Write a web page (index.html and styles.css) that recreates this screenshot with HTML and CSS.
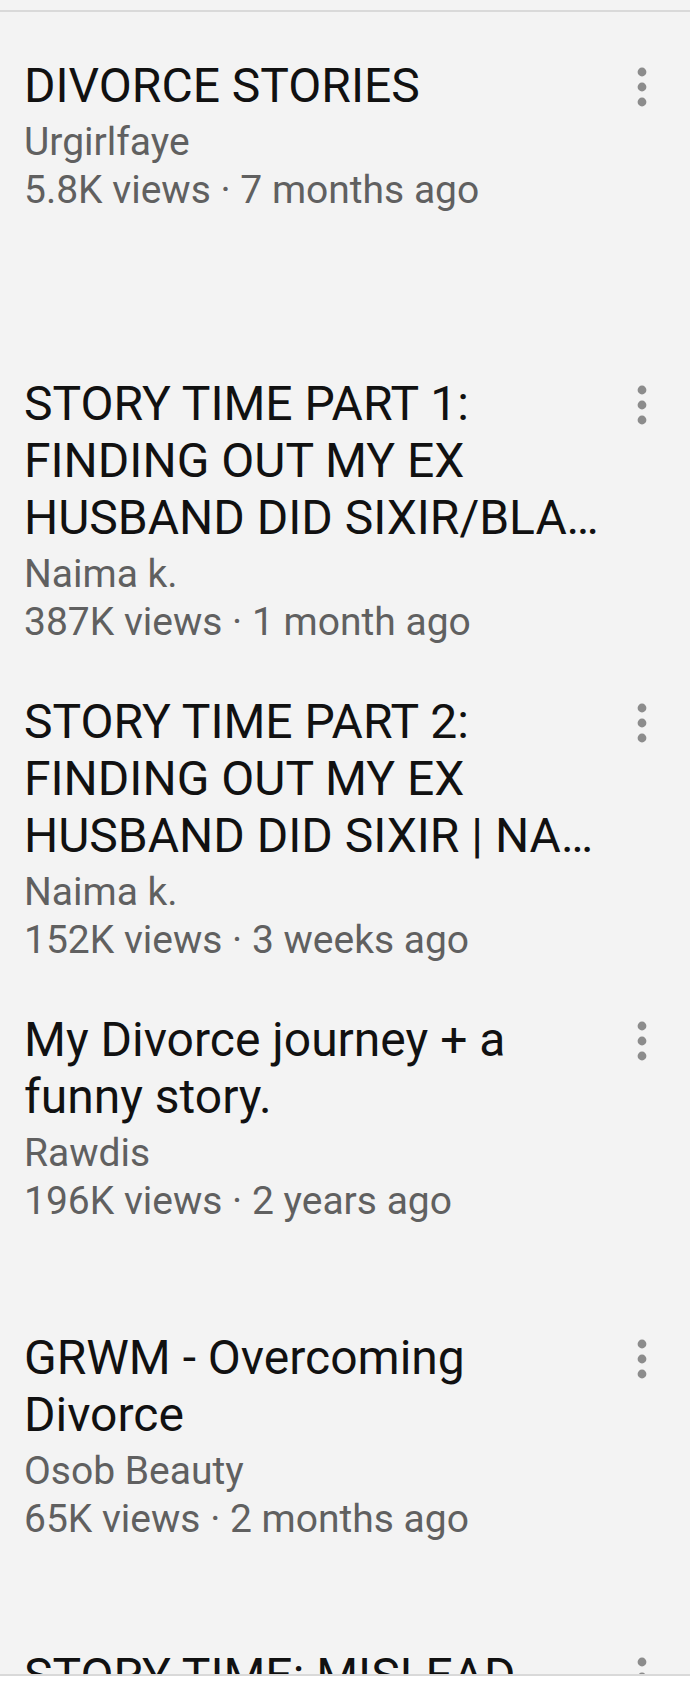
FILE: index.html
```html
<!DOCTYPE html>
<html lang="en">
<head>
<meta charset="utf-8">
<title>Search results</title>
<link rel="stylesheet" href="styles.css">
</head>
<body>
<div class="topbar"></div>
<ul class="list">
  <li class="item">
    <div class="text">
      <div class="title">DIVORCE STORIES</div>
      <div class="channel">Urgirlfaye</div>
      <div class="meta">5.8K views · 7 months ago</div>
    </div>
    <button class="more" aria-label="More"><svg viewBox="0 0 30 60" width="30" height="60"><circle cx="15" cy="15" r="4.4"/><circle cx="15" cy="30" r="4.4"/><circle cx="15" cy="45" r="4.4"/></svg></button>
  </li>
  <li class="item">
    <div class="text">
      <div class="title">
        <span class="tl">STORY TIME PART 1:</span>
        <span class="tl">FINDING OUT MY EX</span>
        <span class="tl clip">HUSBAND DID SIXIR/BLACK MAGIC ON ME</span>
      </div>
      <div class="channel">Naima k.</div>
      <div class="meta">387K views · 1 month ago</div>
    </div>
    <button class="more" aria-label="More"><svg viewBox="0 0 30 60" width="30" height="60"><circle cx="15" cy="15" r="4.4"/><circle cx="15" cy="30" r="4.4"/><circle cx="15" cy="45" r="4.4"/></svg></button>
  </li>
  <li class="item">
    <div class="text">
      <div class="title">
        <span class="tl">STORY TIME PART 2:</span>
        <span class="tl">FINDING OUT MY EX</span>
        <span class="tl clip">HUSBAND DID SIXIR | NAIMA K.</span>
      </div>
      <div class="channel">Naima k.</div>
      <div class="meta">152K views · 3 weeks ago</div>
    </div>
    <button class="more" aria-label="More"><svg viewBox="0 0 30 60" width="30" height="60"><circle cx="15" cy="15" r="4.4"/><circle cx="15" cy="30" r="4.4"/><circle cx="15" cy="45" r="4.4"/></svg></button>
  </li>
  <li class="item">
    <div class="text">
      <div class="title">My Divorce journey + a funny story.</div>
      <div class="channel">Rawdis</div>
      <div class="meta">196K views · 2 years ago</div>
    </div>
    <button class="more" aria-label="More"><svg viewBox="0 0 30 60" width="30" height="60"><circle cx="15" cy="15" r="4.4"/><circle cx="15" cy="30" r="4.4"/><circle cx="15" cy="45" r="4.4"/></svg></button>
  </li>
  <li class="item">
    <div class="text">
      <div class="title">GRWM - Overcoming Divorce</div>
      <div class="channel">Osob Beauty</div>
      <div class="meta">65K views · 2 months ago</div>
    </div>
    <button class="more" aria-label="More"><svg viewBox="0 0 30 60" width="30" height="60"><circle cx="15" cy="15" r="4.4"/><circle cx="15" cy="30" r="4.4"/><circle cx="15" cy="45" r="4.4"/></svg></button>
  </li>
  <li class="item">
    <div class="text">
      <div class="title">STORY TIME: MISLEAD INTO MARRIAGE</div>
      <div class="channel">Naima k.</div>
      <div class="meta">90K views · 1 month ago</div>
    </div>
    <button class="more" aria-label="More"><svg viewBox="0 0 30 60" width="30" height="60"><circle cx="15" cy="15" r="4.4"/><circle cx="15" cy="30" r="4.4"/><circle cx="15" cy="45" r="4.4"/></svg></button>
  </li>
</ul>
<nav class="bottombar"></nav>
</body>
</html>
```

FILE: styles.css
```css
* { box-sizing: border-box; }
html, body { margin: 0; padding: 0; }
body {
  background: #f3f3f3;
  font-family: Roboto, "Noto Sans", "Liberation Sans", sans-serif;
  width: 690px;
  height: 1691px;
  overflow: hidden;
}
.topbar {
  height: 12px;
  border-bottom: 2px solid #d9d9d9;
}
.list {
  list-style: none;
  margin: 0;
  padding: 0;
}
.item {
  display: flex;
  align-items: flex-start;
  height: 318px;
  padding: 45px 33px 0 24px;
}
.text {
  width: 576px;
  flex: none;
}
.title {
  font-size: 48px;
  line-height: 57px;
  color: #111111;
  display: -webkit-box;
  -webkit-box-orient: vertical;
  -webkit-line-clamp: 3;
  overflow: hidden;
}
.tl { display: block; }
.clip {
  white-space: nowrap;
  overflow: hidden;
  text-overflow: ellipsis;
}
.channel {
  margin-top: 4px;
  font-size: 39px;
  line-height: 48px;
  color: #606060;
  white-space: nowrap;
}
.meta {
  font-size: 39px;
  line-height: 48px;
  color: #606060;
  white-space: nowrap;
}
.more {
  margin-left: auto;
  width: 30px;
  height: 60px;
  padding: 0;
  border: 0;
  background: none;
  display: block;
}
.more svg { display: block; fill: #8c8c8c; }
.bottombar {
  position: fixed;
  left: 0;
  right: 0;
  bottom: 0;
  height: 17px;
  background: #ffffff;
  border-top: 2px solid #d9d9d9;
}
```
